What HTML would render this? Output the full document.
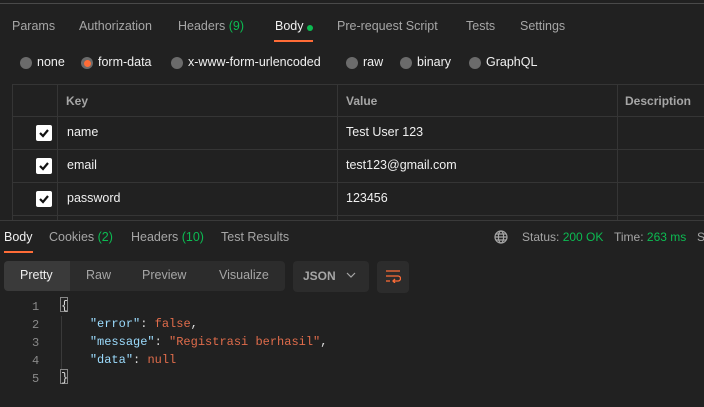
<!DOCTYPE html>
<html><head><meta charset="utf-8"><style>
*{margin:0;padding:0;box-sizing:border-box}
body{width:704px;height:407px;background:#212121;font-family:"Liberation Sans",sans-serif;font-size:12.5px;color:#a6a6a6;position:relative;overflow:hidden}
.a{position:absolute;white-space:nowrap}
.g{color:#0cbb52}
.w{color:#f0f0f0}
.rad{position:absolute;width:12px;height:12px;border-radius:50%;background:#6b6b6b;top:57px}
.hl{position:absolute;height:1px;background:#353535}
.vl{position:absolute;width:1px;background:#353535}
.cb{position:absolute;left:36px;width:16px;height:16px;background:#fff;border-radius:2px}
.mono{font-family:"Liberation Mono",monospace;font-size:12px;white-space:pre}
</style></head><body>
<div class="hl" style="left:0;top:3px;width:704px;background:#4a4a4a"></div>

<div class="a" style="left:12px;top:19px">Params</div>
<div class="a" style="left:79px;top:19px">Authorization</div>
<div class="a" style="left:178px;top:19px">Headers <span class="g">(9)</span></div>
<div class="a w" style="left:275px;top:19px">Body</div>
<div class="a" style="left:307px;top:25px;width:6px;height:6px;border-radius:50%;background:#0cbb52"></div>
<div class="a" style="left:274px;top:40px;width:39px;height:2px;background:#ff6c37"></div>
<div class="a" style="left:337px;top:19px">Pre-request Script</div>
<div class="a" style="left:466px;top:19px">Tests</div>
<div class="a" style="left:520px;top:19px">Settings</div>

<div class="rad" style="left:20px"></div><div class="a w" style="left:37px;top:55px">none</div>
<div class="rad" style="left:81px"></div><div class="a" style="left:84px;top:60px;width:7px;height:7px;border-radius:50%;background:#ff6c37"></div><div class="a w" style="left:98px;top:55px">form-data</div>
<div class="rad" style="left:171px"></div><div class="a w" style="left:188px;top:55px">x-www-form-urlencoded</div>
<div class="rad" style="left:346px"></div><div class="a w" style="left:363px;top:55px">raw</div>
<div class="rad" style="left:400px"></div><div class="a w" style="left:417px;top:55px">binary</div>
<div class="rad" style="left:469px"></div><div class="a w" style="left:486px;top:55px">GraphQL</div>

<div class="hl" style="left:12px;top:84px;width:692px"></div>
<div class="hl" style="left:12px;top:116px;width:692px"></div>
<div class="hl" style="left:12px;top:149px;width:692px"></div>
<div class="hl" style="left:12px;top:182px;width:692px"></div>
<div class="hl" style="left:12px;top:215px;width:692px"></div>
<div class="vl" style="left:12px;top:84px;height:136px"></div>
<div class="vl" style="left:57px;top:84px;height:136px"></div>
<div class="vl" style="left:337px;top:84px;height:136px"></div>
<div class="vl" style="left:617px;top:84px;height:136px"></div>
<div class="a" style="left:66px;top:94px;font-weight:bold;font-size:12px">Key</div>
<div class="a" style="left:346px;top:94px;font-weight:bold;font-size:12px">Value</div>
<div class="a" style="left:625px;top:94px;font-weight:bold;font-size:12px">Description</div>
<div class="cb" style="top:125px"></div><div class="cb" style="top:158px"></div><div class="cb" style="top:191px"></div>
<svg class="a" style="left:36px;top:125px" width="16" height="82"><g fill="none" stroke="#111" stroke-width="2.2"><path d="M4 8l3 3 5-6"/><path d="M4 41l3 3 5-6"/><path d="M4 74l3 3 5-6"/></g></svg>
<div class="a w" style="left:67px;top:125px">name</div>
<div class="a w" style="left:67px;top:158px">email</div>
<div class="a w" style="left:67px;top:191px">password</div>
<div class="a w" style="left:346px;top:125px">Test User 123</div>
<div class="a w" style="left:346px;top:158px">test123@gmail.com</div>
<div class="a w" style="left:346px;top:191px">123456</div>

<div class="hl" style="left:0;top:220px;width:704px;background:#3a3a3a"></div>
<div class="a w" style="left:4px;top:230px">Body</div>
<div class="a" style="left:4px;top:251px;width:29px;height:2px;background:#ff6c37"></div>
<div class="a" style="left:49px;top:230px">Cookies <span class="g">(2)</span></div>
<div class="a" style="left:131px;top:230px">Headers <span class="g">(10)</span></div>
<div class="a" style="left:221px;top:230px">Test Results</div>
<svg class="a" style="left:494px;top:230px" width="14" height="14"><g fill="none" stroke="#a6a6a6" stroke-width="1.2"><circle cx="7" cy="7" r="6"/><ellipse cx="7" cy="7" rx="2.6" ry="6"/><path d="M1 7h12M2 4h10M2 10h10"/></g></svg>
<div class="a" style="left:522px;top:230px;font-size:12px">Status: <span class="g">200 OK</span></div>
<div class="a" style="left:614px;top:230px;font-size:12px">Time: <span class="g">263 ms</span></div>
<div class="a" style="left:697px;top:230px;font-size:12px">S</div>

<div class="a" style="left:4px;top:261px;width:281px;height:30px;background:#2c2c2c;border-radius:4px"></div>
<div class="a" style="left:4px;top:261px;width:66px;height:30px;background:#3a3a3a;border-radius:4px 0 0 4px"></div>
<div class="a w" style="left:20px;top:268px">Pretty</div>
<div class="a" style="left:86px;top:268px">Raw</div>
<div class="a" style="left:142px;top:268px">Preview</div>
<div class="a" style="left:219px;top:268px">Visualize</div>
<div class="a" style="left:293px;top:261px;width:76px;height:31px;background:#2c2c2c;border-radius:4px"></div>
<div class="a" style="left:303px;top:269px;font-size:12px;font-weight:bold">JSON</div>
<svg class="a" style="left:346px;top:272px" width="10" height="6"><path d="M1 1l4 4 4-4" fill="none" stroke="#a6a6a6" stroke-width="1.2"/></svg>
<div class="a" style="left:377px;top:261px;width:32px;height:32px;background:#2c2c2c;border-radius:4px"></div>
<svg class="a" style="left:385px;top:269px" width="16" height="14"><g fill="none" stroke="#ff6c37" stroke-width="1.3"><path d="M1 2h14M1 7h12a2.5 2.5 0 0 1 0 5H8M10 10l-2 2 2 2M1 12h4"/></g></svg>

<div class="a mono" style="left:32px;top:298px;color:#8a8a8a;line-height:18px">1
2
3
4
5</div>
<div class="vl" style="left:61px;top:316px;height:54px;background:#3a3a3a"></div>
<div class="a" style="left:60px;top:297px;width:8px;height:15px;border:1px solid #888"></div>
<div class="a" style="left:60px;top:369px;width:8px;height:15px;border:1px solid #888"></div>
<div class="a mono" style="left:61px;top:297px;line-height:18px;color:#ddd">{
    <span style="color:#9cdcfe">"error"</span>: <span style="color:#e06c4b">false</span>,
    <span style="color:#9cdcfe">"message"</span>: <span style="color:#e06c4b">"Registrasi berhasil"</span>,
    <span style="color:#9cdcfe">"data"</span>: <span style="color:#e06c4b">null</span>
}</div>
</body></html>
